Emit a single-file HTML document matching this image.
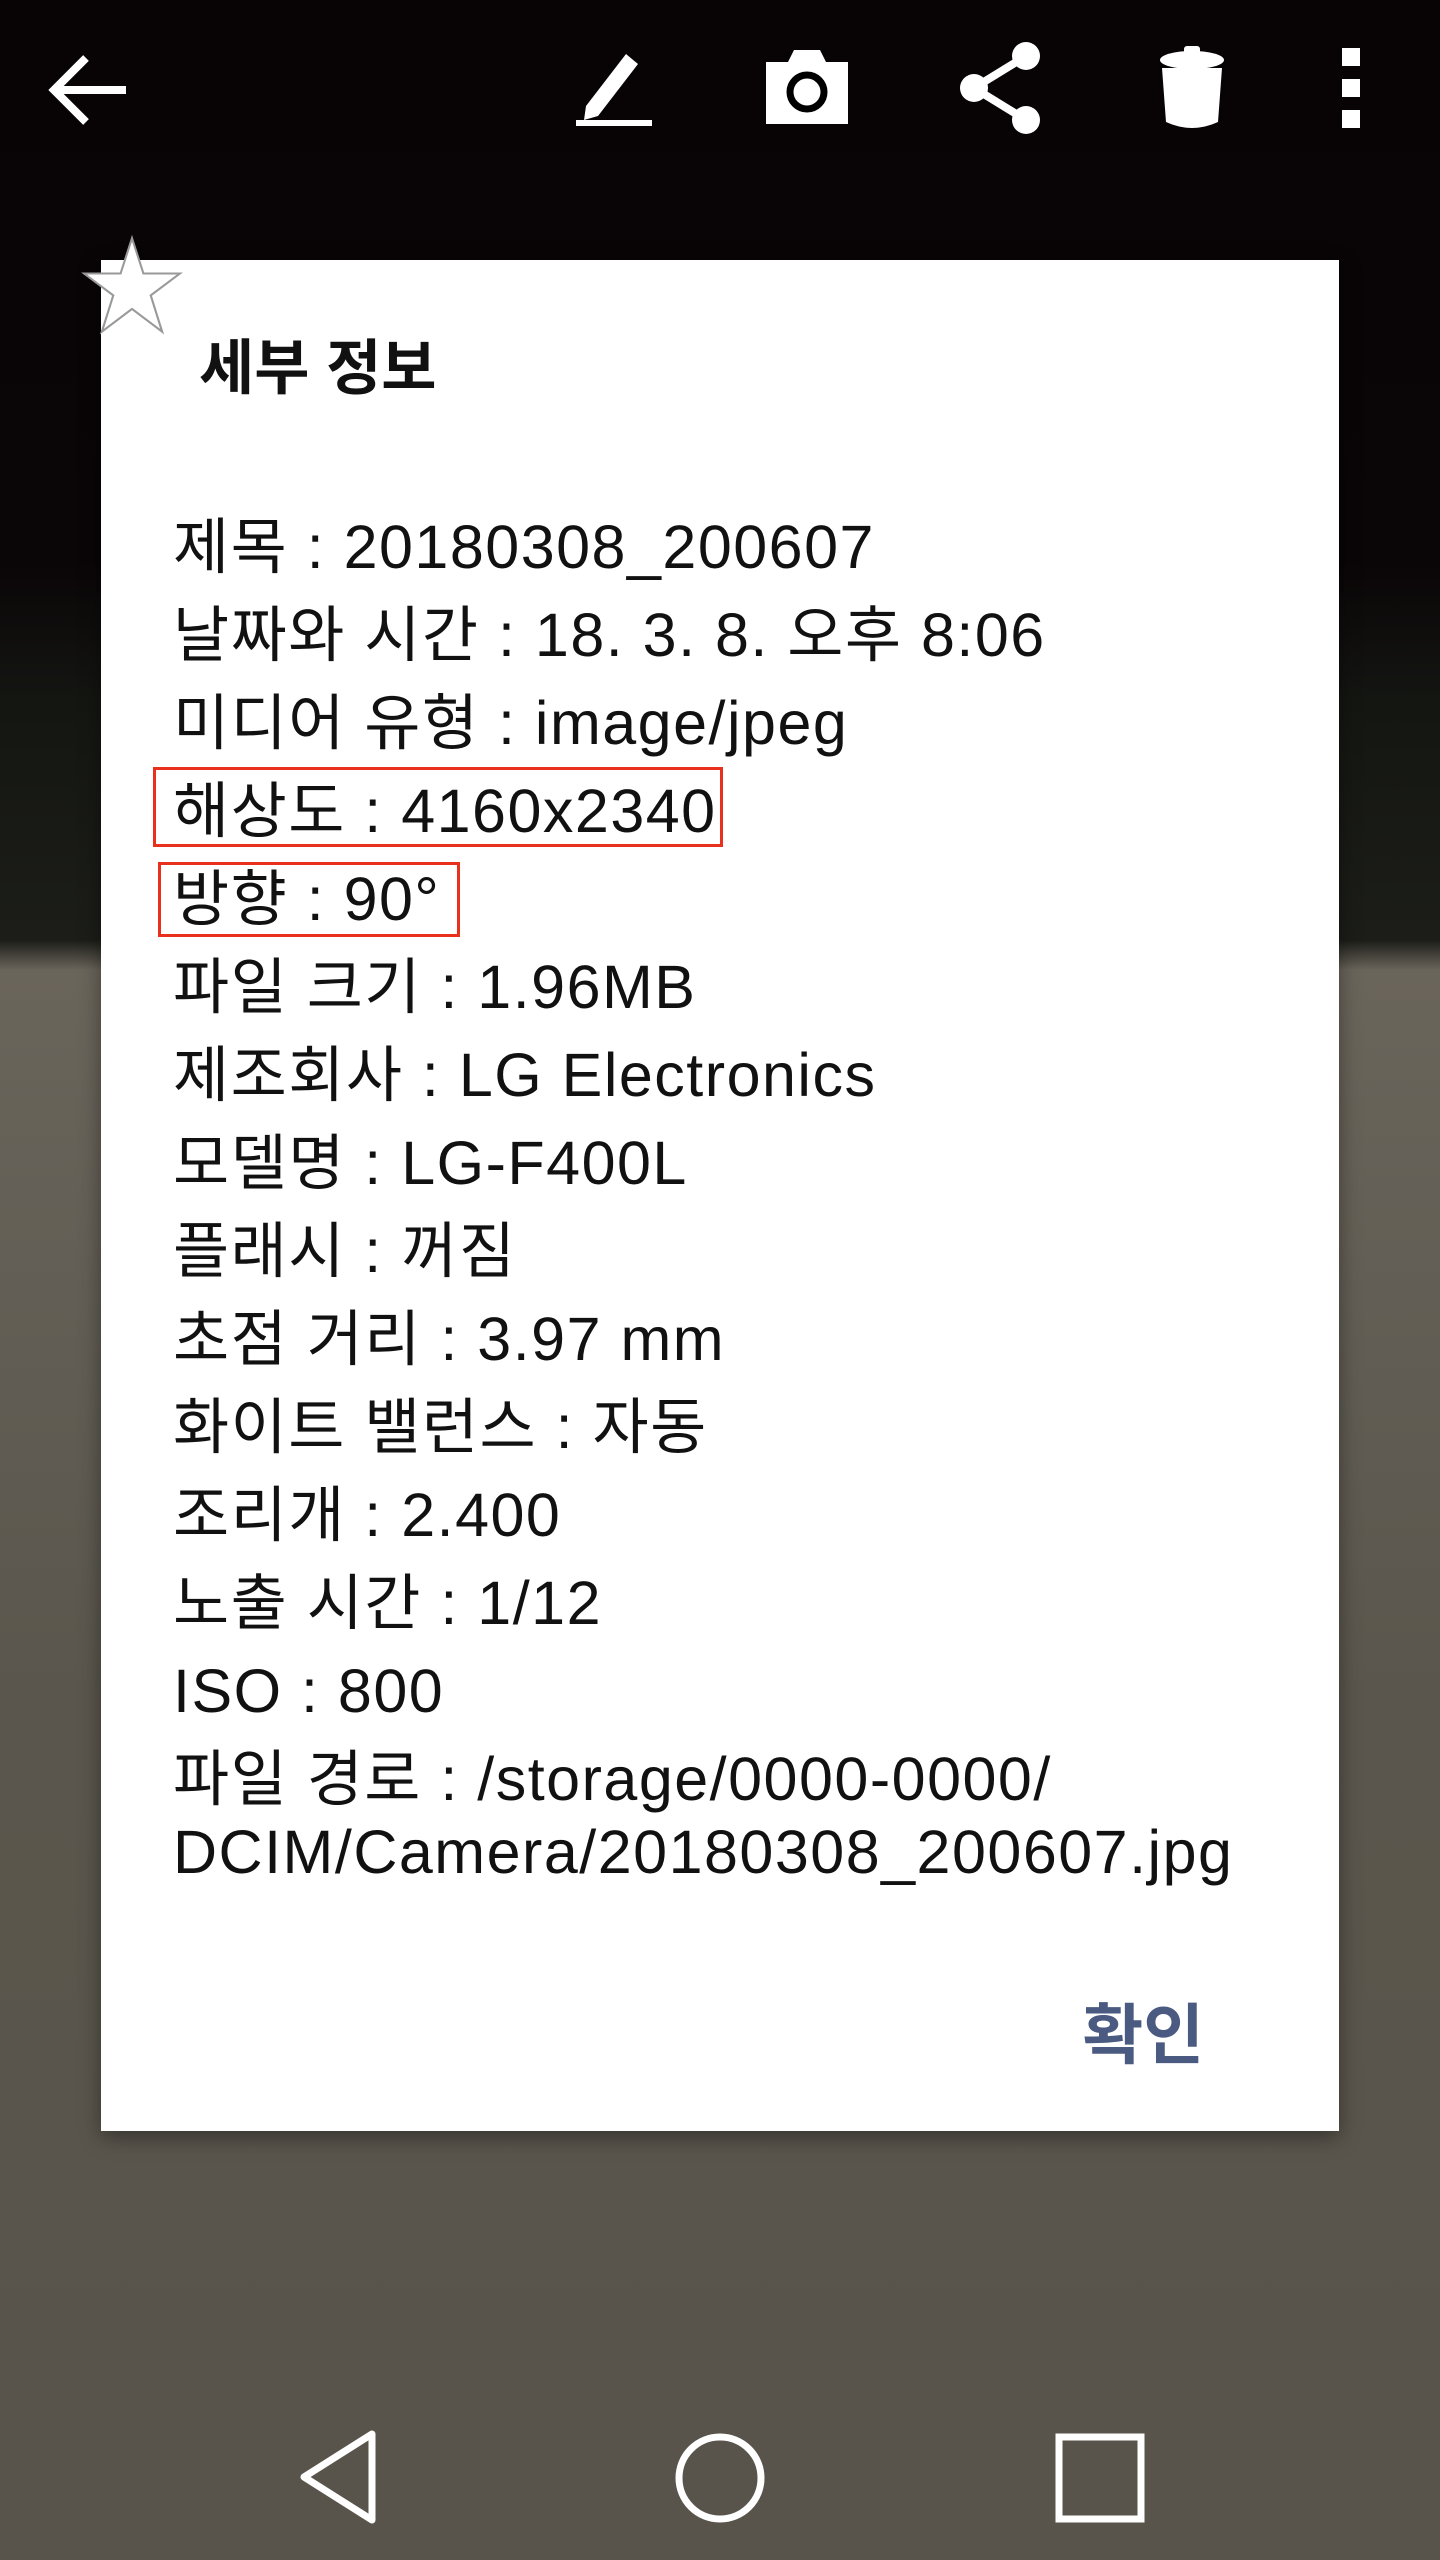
<!DOCTYPE html>
<html><head><meta charset="utf-8"><style>
html,body{margin:0;padding:0;width:1440px;height:2560px;overflow:hidden}
body{position:relative;background:linear-gradient(180deg,#080406 0,#0a0507 560px,#141612 700px,#1c1d18 940px,#6a655b 970px,#625e55 1300px,#5a564d 1700px,#58544b 2560px);font-family:"Liberation Sans","Noto Sans CJK KR",sans-serif}
.ic{position:absolute}
.dlg{position:absolute;left:101px;top:260px;width:1238px;height:1871px;background:#fff;box-shadow:0 6px 20px rgba(0,0,0,.4)}
.title{position:absolute;left:98px;top:60px;font-size:60px;font-weight:bold;color:#111}
.body{position:absolute;left:72px;top:243px;font-size:61px;letter-spacing:1.5px;color:#111;line-height:88px;white-space:nowrap}
.body div{height:88px}
.rb{position:absolute;border:3px solid #e8301c}
.ok{position:absolute;right:135px;top:1722px;font-size:66px;font-weight:bold;color:#4a5a80}
</style></head><body>
<svg class="ic" style="left:48px;top:52px" width="84" height="76" viewBox="0 0 84 76"><path d="M4 38H78M38 6L6 38L38 70" fill="none" stroke="#fff" stroke-width="8"/></svg>
<svg class="ic" style="left:574px;top:44px" width="84" height="84" viewBox="0 0 84 84"><path d="M12 62L52 10L64 20L24 72L10 76Z" fill="#fff"/><rect x="2" y="76" width="76" height="6" fill="#fff"/></svg>
<svg class="ic" style="left:762px;top:48px" width="90" height="76" viewBox="0 0 90 76"><path d="M4 14H26L32 2H58L64 14H86V76H4Z" fill="#fff"/><circle cx="45" cy="44" r="17" fill="none" stroke="#000" stroke-width="7"/></svg>
<svg class="ic" style="left:956px;top:40px" width="90" height="96" viewBox="0 0 90 96"><path d="M70 16L18 48L70 80" fill="none" stroke="#fff" stroke-width="8"/><circle cx="70" cy="16" r="14" fill="#fff"/><circle cx="18" cy="48" r="14" fill="#fff"/><circle cx="70" cy="80" r="14" fill="#fff"/></svg>
<svg class="ic" style="left:1156px;top:46px" width="72" height="84" viewBox="0 0 72 84"><rect x="28" y="0" width="16" height="8" rx="3" fill="#fff"/><ellipse cx="36" cy="14" rx="32" ry="9" fill="#fff"/><path d="M6 22H66L62 76Q36 88 10 76Z" fill="#fff"/></svg>
<svg class="ic" style="left:1340px;top:48px" width="24" height="80" viewBox="0 0 24 80"><rect x="2" y="0" width="18" height="18" fill="#fff"/><rect x="2" y="31" width="18" height="18" fill="#fff"/><rect x="2" y="62" width="18" height="18" fill="#fff"/></svg>

<div class="dlg">
<div class="title">세부 정보</div>
<div class="rb" style="left:52px;top:507px;width:564px;height:74px"></div>
<div class="rb" style="left:57px;top:602px;width:296px;height:69px"></div>
<div class="body">
<div>제목 : 20180308_200607</div>
<div>날짜와 시간 : 18. 3. 8. 오후 8:06</div>
<div>미디어 유형 : image/jpeg</div>
<div>해상도 : 4160x2340</div>
<div>방향 : 90°</div>
<div>파일 크기 : 1.96MB</div>
<div>제조회사 : LG Electronics</div>
<div>모델명 : LG-F400L</div>
<div>플래시 : 꺼짐</div>
<div>초점 거리 : 3.97 mm</div>
<div>화이트 밸런스 : 자동</div>
<div>조리개 : 2.400</div>
<div>노출 시간 : 1/12</div>
<div>ISO : 800</div>
<div style="height:78px">파일 경로 : /storage/0000-0000/</div>
<div style="height:78px;line-height:78px">DCIM/Camera/20180308_200607.jpg</div>
</div>
<div class="ok">확인</div>
</div>
<svg class="ic" style="left:80px;top:234px" width="104" height="104" viewBox="0 0 100 100"><path d="M50 4L61 38H96L68 59L79 94L50 72L21 94L32 59L4 38H39Z" fill="#fff" stroke="#999" stroke-width="2"/></svg>

<svg class="ic" style="left:296px;top:2430px" width="90" height="94" viewBox="0 0 90 94"><path d="M76 4V90L8 47Z" fill="none" stroke="#fff" stroke-width="7" stroke-linejoin="round"/></svg>
<svg class="ic" style="left:672px;top:2430px" width="96" height="96" viewBox="0 0 96 96"><circle cx="48" cy="48" r="41" fill="none" stroke="#fff" stroke-width="7"/></svg>
<svg class="ic" style="left:1054px;top:2432px" width="92" height="92" viewBox="0 0 92 92"><rect x="5" y="5" width="82" height="82" fill="none" stroke="#fff" stroke-width="7"/></svg>
</body></html>
